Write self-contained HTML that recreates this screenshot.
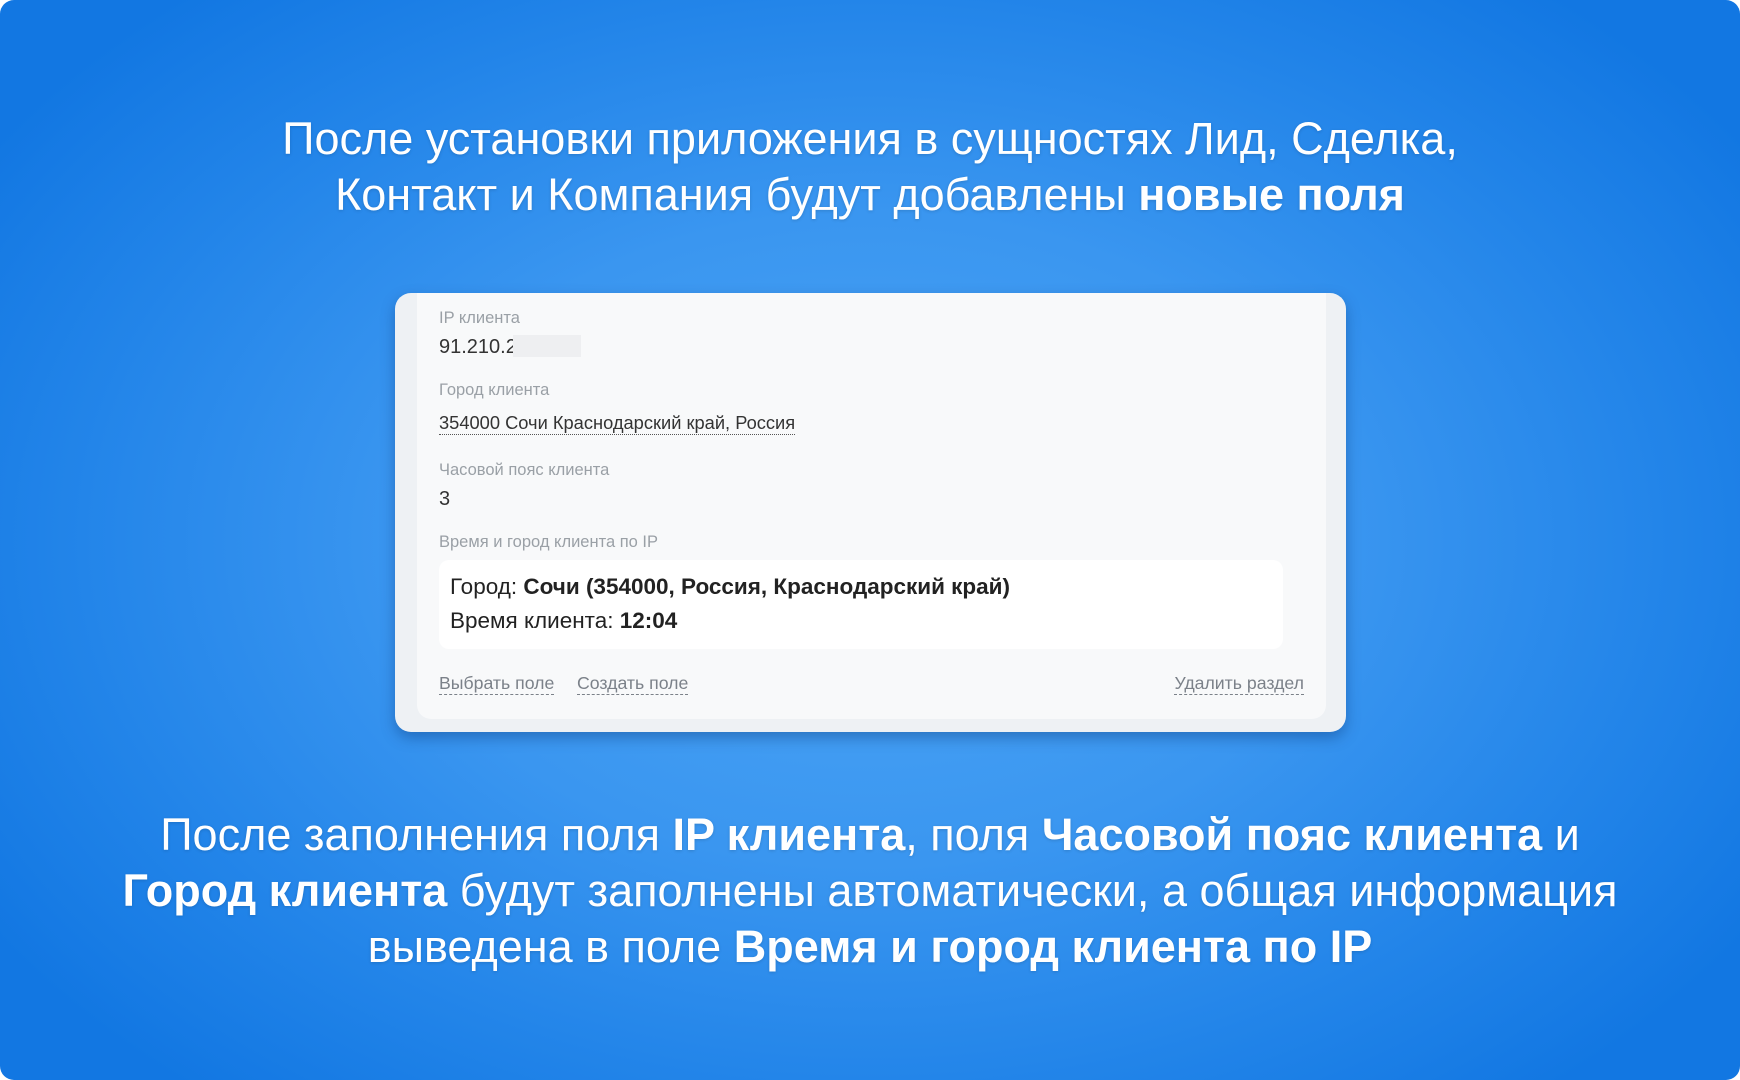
<!DOCTYPE html>
<html><head><meta charset="utf-8"><style>
html,body{margin:0;padding:0;background:#fff;}
.bg{position:relative;width:1740px;height:1080px;border-radius:14px;overflow:hidden;
background:radial-gradient(ellipse 1050px 720px at 50% 50%,#4ca6f6 0%,#3a96f0 45%,#2385e9 75%,#1277e2 100%);
font-family:"Liberation Sans",sans-serif;color:#fff;}
.h{position:absolute;left:0;width:1740px;text-align:center;font-size:45px;line-height:56px;text-shadow:0 1px 3px rgba(0,0,0,.15);white-space:nowrap;}
.h b{font-weight:700;}
.card{position:absolute;left:395px;top:293px;width:951px;height:439px;border-radius:16px;background:#eef1f4;box-shadow:0 6px 14px rgba(0,40,100,.35);}
.inner{position:absolute;left:22px;top:0;width:909px;height:426px;background:#f8f9fa;border-radius:0 0 14px 14px;color:#333;}
.lbl{position:absolute;left:22px;font-size:16.5px;color:#9aa0a6;}
.val{position:absolute;left:22px;font-size:20px;color:#333;}
.box{position:absolute;left:22px;top:267px;width:844px;height:89px;background:#fff;border-radius:10px;}
.box div{position:absolute;left:11px;font-size:22.5px;color:#222;}
.lnk{position:absolute;top:380px;font-size:17.7px;color:#7b8189;border-bottom:1px dashed #7b8189;line-height:21px;}
</style></head><body>
<div class="bg">
<div class="h" style="top:111px">После установки приложения в сущностях Лид, Сделка,</div>
<div class="h" style="top:167px">Контакт и Компания будут добавлены <b>новые поля</b></div>

<div class="card"><div class="inner">
<div class="lbl" style="top:16px">IP клиента</div>
<div class="val" style="top:42px">91.210.2<span style="display:inline-block;width:68px;height:22px;background:#eeeff1;vertical-align:-4px;margin-left:-4px"></span></div>
<div class="lbl" style="top:88px">Город клиента</div>
<div class="val" style="top:118px;font-size:18.3px;border-bottom:1px dotted #555;line-height:23px">354000 Сочи Краснодарский край, Россия</div>
<div class="lbl" style="top:168px">Часовой пояс клиента</div>
<div class="val" style="top:195px">3</div>
<div class="lbl" style="top:240px">Время и город клиента по IP</div>
<div class="box">
<div style="top:14px">Город: <b>Сочи (354000, Россия, Краснодарский край)</b></div>
<div style="top:48px">Время клиента: <b>12:04</b></div>
</div>
<div class="lnk" style="left:22px">Выбрать поле</div>
<div class="lnk" style="left:160px">Создать поле</div>
<div class="lnk" style="right:22px">Удалить раздел</div>
</div></div>

<div class="h" style="top:807px">После заполнения поля <b>IP клиента</b>, поля <b>Часовой пояс клиента</b> и</div>
<div class="h" style="top:863px"><b>Город клиента</b> будут заполнены автоматически, а общая информация</div>
<div class="h" style="top:919px">выведена в поле <b>Время и город клиента по IP</b></div>
</div>
</body></html>
